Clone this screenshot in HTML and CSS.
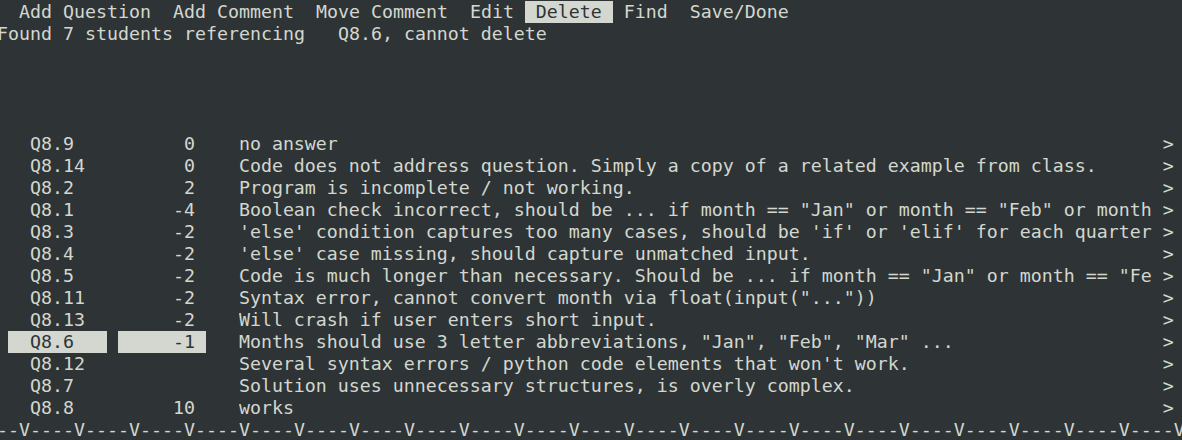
FILE: index.html
```html
<!DOCTYPE html>
<html>
<head>
<meta charset="utf-8">
<link rel="stylesheet" href="styles.css">
</head>
<body>
<div class="term">
  <div class="row menu"><span class="item">  Add Question </span><span class="item"> Add Comment </span><span class="item"> Move Comment </span><span class="item"> Edit </span><span class="item sel"> Delete </span><span class="item"> Find </span><span class="item"> Save/Done</span></div>
  <div class="row">Found 7 students referencing   Q8.6, cannot delete</div>
  <div class="row"></div>
  <div class="row"></div>
  <div class="row"></div>
  <div class="row"></div>
  <div class="list">
    <div class="item-row"><span class="label">Q8.9</span><span class="score">0</span><span class="comment">no answer</span><span class="more">&gt;</span></div>
    <div class="item-row"><span class="label">Q8.14</span><span class="score">0</span><span class="comment">Code does not address question. Simply a copy of a related example from class.</span><span class="more">&gt;</span></div>
    <div class="item-row"><span class="label">Q8.2</span><span class="score">2</span><span class="comment">Program is incomplete / not working.</span><span class="more">&gt;</span></div>
    <div class="item-row"><span class="label">Q8.1</span><span class="score">-4</span><span class="comment">Boolean check incorrect, should be ... if month == "Jan" or month == "Feb" or month</span><span class="more">&gt;</span></div>
    <div class="item-row"><span class="label">Q8.3</span><span class="score">-2</span><span class="comment">'else' condition captures too many cases, should be 'if' or 'elif' for each quarter</span><span class="more">&gt;</span></div>
    <div class="item-row"><span class="label">Q8.4</span><span class="score">-2</span><span class="comment">'else' case missing, should capture unmatched input.</span><span class="more">&gt;</span></div>
    <div class="item-row"><span class="label">Q8.5</span><span class="score">-2</span><span class="comment">Code is much longer than necessary. Should be ... if month == "Jan" or month == "Fe</span><span class="more">&gt;</span></div>
    <div class="item-row"><span class="label">Q8.11</span><span class="score">-2</span><span class="comment">Syntax error, cannot convert month via float(input("..."))</span><span class="more">&gt;</span></div>
    <div class="item-row"><span class="label">Q8.13</span><span class="score">-2</span><span class="comment">Will crash if user enters short input.</span><span class="more">&gt;</span></div>
    <div class="item-row current"><span class="label">Q8.6</span><span class="score">-1</span><span class="comment">Months should use 3 letter abbreviations, "Jan", "Feb", "Mar" ...</span><span class="more">&gt;</span></div>
    <div class="item-row"><span class="label">Q8.12</span><span class="score"></span><span class="comment">Several syntax errors / python code elements that won't work.</span><span class="more">&gt;</span></div>
    <div class="item-row"><span class="label">Q8.7</span><span class="score"></span><span class="comment">Solution uses unnecessary structures, is overly complex.</span><span class="more">&gt;</span></div>
    <div class="item-row"><span class="label">Q8.8</span><span class="score">10</span><span class="comment">works</span><span class="more">&gt;</span></div>
  </div>
  <div class="row ruler">--V----V----V----V----V----V----V----V----V----V----V----V----V----V----V----V----V----V----V----V----V----V</div>
</div>
</body>
</html>
```

FILE: styles.css
```css
html, body {
  margin: 0;
  padding: 0;
  background: #2e3436;
  overflow: hidden;
}

.term {
  font-family: "DejaVu Sans Mono", monospace;
  font-size: 18.27px;
  line-height: 22px;
  color: #d3d7cf;
  margin-left: -3px;
  padding-top: 1px;
  overflow: hidden;
}

.row {
  height: 22px;
  white-space: pre;
}

.menu {
  display: flex;
}

.menu .item {
  white-space: pre;
}

.menu .item.sel {
  background: #d3d7cf;
  color: #2e3436;
}

.list {
  display: flex;
  flex-direction: column;
}

.item-row {
  display: flex;
  height: 22px;
  white-space: pre;
  padding-left: 1ch;
}

.item-row .label {
  width: 9ch;
  padding-left: 2ch;
  box-sizing: border-box;
}

.item-row .score {
  width: 8ch;
  margin-left: 1ch;
  padding-right: 1ch;
  box-sizing: border-box;
  text-align: right;
}

.item-row .comment {
  width: 84ch;
  margin-left: 3ch;
  overflow: hidden;
}

.item-row .more {
  width: 1ch;
}

.item-row.current .label,
.item-row.current .score {
  background: #d3d7cf;
  color: #2e3436;
}

.ruler {
  overflow: hidden;
}
```
